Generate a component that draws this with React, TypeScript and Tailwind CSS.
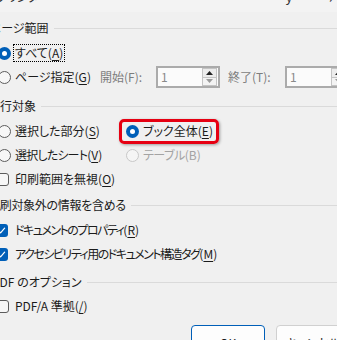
import React from 'react';

type RadioState = 'on' | 'off' | 'disabled';

function Radio({ state }: { state: RadioState }) {
  if (state === 'on') {
    return (
      <span className="flex h-[13px] w-[13px] shrink-0 items-center justify-center rounded-full bg-[#005fb8]">
        <span className="h-[5px] w-[5px] rounded-full bg-white" />
      </span>
    );
  }
  return (
    <span
      className={
        state === 'disabled'
          ? 'h-[13px] w-[13px] shrink-0 rounded-full border border-[#c8c8c8] bg-[#f5f5f5]'
          : 'h-[13px] w-[13px] shrink-0 rounded-full border border-[#5c5c5c] bg-[#f7f7f7]'
      }
    />
  );
}

function Check({ checked }: { checked: boolean }) {
  if (checked) {
    return (
      <span className="flex h-[13px] w-[13px] shrink-0 items-center justify-center rounded-[3px] bg-[#005fb8]">
        <svg width="9" height="9" viewBox="0 0 9 9" fill="none">
          <path d="M1.5 4.8 L3.6 6.8 L7.6 2.2" stroke="white" strokeWidth="1.2" strokeLinecap="round" strokeLinejoin="round" />
        </svg>
      </span>
    );
  }
  return <span className="h-[13px] w-[13px] shrink-0 rounded-[3px] border border-[#5c5c5c] bg-[#f7f7f7]" />;
}

// label with an underlined access key, e.g. すべて(A)
function Label({ text, k, disabled, tight = '' }: { text: string; k: string; disabled?: boolean; tight?: string }) {
  return (
    <span className={`whitespace-nowrap ${disabled ? 'text-[#a3a3a3]' : 'text-[#1b1b1b]'}`}>
      <span className={tight}>{text}</span>(<span className={disabled ? '' : 'underline underline-offset-2'}>{k}</span>)
    </span>
  );
}

function Heading({ text, offset }: { text: string; offset: string }) {
  return (
    <div className="flex h-6 items-center">
      <span className={`whitespace-nowrap text-[#1b1b1b] ${offset}`}>{text}</span>
      <span className="ml-[5px] h-px flex-1 bg-[#dadada]" />
    </div>
  );
}

function NumberBox() {
  return (
    <div className="flex h-[22px] w-[64px] shrink-0 items-center border-2 border-[#ababab] bg-[#fbfbfb] pl-[3px] pr-px">
      <span className="flex-1 text-[#8a8a8a]">1</span>
      <div className="flex h-[18px] w-[15px] flex-col">
        <div className="flex flex-1 items-center justify-center border border-[#c4c4c4] bg-[#ececec]">
          <svg width="7" height="4" viewBox="0 0 7 4"><path d="M0 4 L3.5 0 L7 4 Z" fill="#222" /></svg>
        </div>
        <div className="flex flex-1 items-center justify-center border border-t-0 border-[#c4c4c4] bg-[#f3f3f3]">
          <svg width="7" height="4" viewBox="0 0 7 4"><path d="M0 0 L3.5 4 L7 0 Z" fill="#9a9a9a" /></svg>
        </div>
      </div>
    </div>
  );
}

export default function App() {
  return (
    <div
      className="h-[340px] w-[337px] overflow-hidden bg-[#f0f0f0] text-[12px] leading-none [font-feature-settings:'palt']"
      style={{ fontFamily: '"Noto Sans CJK JP", "Noto Sans", sans-serif' }}
    >
      {/* title bar, cut off at the top */}
      <div className="flex h-3 items-start overflow-hidden bg-[#f3f3f3]">
        <span className="-mt-[9px] ml-[-4px] text-[#333]">プリンタ</span>
        <span className="ml-auto -mt-[9px] text-[#333]">ｙ</span>
        <span className="ml-[36px] mr-[2px] -mt-[9px] text-[#333]">ﾉ</span>
      </div>

      <div className="mt-1">
        {/* ページ範囲 */}
        <Heading text="ページ範囲" offset="ml-[-11px]" />
        <div className="ml-[-2px] mt-px flex h-6 items-center">
          <Radio state="on" />
          <span className="ml-[2px] border border-dotted border-black px-px py-[2px]">
            <Label text="すべて" k="A" />
          </span>
        </div>
        <div className="ml-[-2px] flex h-6 items-center">
          <div className="flex w-[102px] shrink-0 items-center gap-1">
            <Radio state="off" />
            <Label text="ページ指定" k="G" />
          </div>
          <span className="w-[56px] shrink-0 whitespace-nowrap text-[#7d7d7d]">開始(F):</span>
          <NumberBox />
          <span className="ml-[8px] w-[57px] shrink-0 whitespace-nowrap text-[#7d7d7d]">終了(T):</span>
          <NumberBox />
        </div>

        {/* 発行対象 */}
        <div className="mt-[5px]">
          <Heading text="発行対象" offset="ml-[-12px]" />
        </div>
        <div className="ml-[-2px] mt-px flex h-6 items-center">
          <div className="flex w-[128px] shrink-0 items-center gap-1">
            <Radio state="off" />
            <Label text="選択した部分" k="S" />
          </div>
          <div className="relative flex items-center gap-[4px]">
            <Radio state="on" />
            <Label text="ブック全体" k="E" />
            <span className="pointer-events-none absolute left-[-7px] top-[-6px] h-[25px] w-[100px] rounded-[5px] border-[3px] border-[#e60012] shadow-[1px_1px_3px_rgba(0,0,0,0.35)]" />
          </div>
        </div>
        <div className="ml-[-2px] flex h-6 items-center">
          <div className="flex w-[128px] shrink-0 items-center gap-1">
            <Radio state="off" />
            <Label text="選択したシート" k="V" tight="tracking-[-0.8px]" />
          </div>
          <div className="flex items-center gap-[4px]">
            <Radio state="disabled" />
            <Label text="テーブル" k="B" disabled tight="tracking-[-0.5px]" />
          </div>
        </div>
        <div className="ml-[-4px] flex h-6 items-center gap-[6px]">
          <Check checked={false} />
          <Label text="印刷範囲を無視" k="O" />
        </div>

        {/* 印刷対象外の情報を含める */}
        <div className="mt-[2px] tracking-[-0.3px]">
          <Heading text="印刷対象外の情報を含める" offset="ml-[-12px]" />
        </div>
        <div className="ml-[-5px] mt-px flex h-6 items-center gap-[7px]">
          <Check checked />
          <Label text="ドキュメントのプロパティ" k="R" tight="tracking-[-1.5px]" />
        </div>
        <div className="ml-[-5px] flex h-6 items-center gap-[7px]">
          <Check checked />
          <Label text="アクセシビリティ用のドキュメント構造タグ" k="M" tight="tracking-[-1.5px]" />
        </div>

        {/* PDF のオプション */}
        <div className="mt-1">
          <Heading text="PDF のオプション" offset="ml-[-8px]" />
        </div>
        <div className="ml-[-4px] flex h-6 items-center gap-[6px]">
          <Check checked={false} />
          <span className="whitespace-nowrap text-[#1b1b1b]">
            PDF/A 準拠(<span className="underline underline-offset-2">/</span>)
          </span>
        </div>

        {/* buttons */}
        <div className="mt-[7px] flex gap-[11px] pl-[191px]">
          <div className="flex h-[26px] w-[74px] shrink-0 items-center justify-center rounded-[4px] border border-[#005fb8] bg-[#fdfdfd] pt-[10px] text-[#1b1b1b]">
            OK
          </div>
          <div className="flex h-[26px] w-[74px] shrink-0 items-center justify-center rounded-[4px] border border-[#d0d0d0] bg-[#fdfdfd] pt-[10px] text-[#1b1b1b]">
            キャンセル
          </div>
        </div>
      </div>
    </div>
  );
}
